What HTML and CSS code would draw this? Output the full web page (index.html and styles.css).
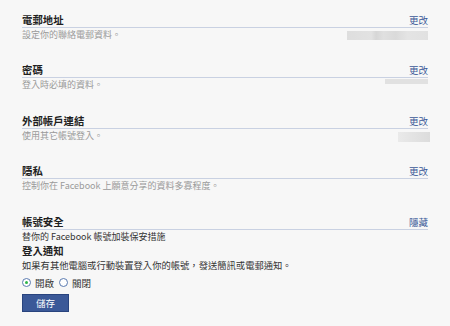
FILE: index.html
```html
<!DOCTYPE html>
<html lang="zh-Hant">
<head>
<meta charset="utf-8">
<link rel="stylesheet" href="styles.css">
</head>
<body>
<div class="page">
  <div class="section">
    <div class="head"><span class="title">電郵地址</span><a class="link">更改</a></div>
    <div class="desc"><span>設定你的聯絡電郵資料。</span><span class="blur blur-email"></span></div>
  </div>
  <div class="section">
    <div class="head"><span class="title">密碼</span><a class="link">更改</a></div>
    <div class="desc"><span>登入時必填的資料。</span><span class="blur blur-pass"></span></div>
  </div>
  <div class="section">
    <div class="head"><span class="title">外部帳戶連結</span><a class="link">更改</a></div>
    <div class="desc"><span>使用其它帳號登入。</span><span class="blur blur-ext"></span></div>
  </div>
  <div class="section">
    <div class="head"><span class="title">隱私</span><a class="link">更改</a></div>
    <div class="desc"><span>控制你在 Facebook 上願意分享的資料多寡程度。</span></div>
  </div>
  <div class="section last">
    <div class="head"><span class="title">帳號安全</span><a class="link">隱藏</a></div>
    <div class="sec-desc">替你的 Facebook 帳號加裝保安措施</div>
    <div class="sub-title">登入通知</div>
    <div class="sub-text">如果有其他電腦或行動裝置登入你的帳號，發送簡訊或電郵通知。</div>
    <div class="radios">
      <span class="radio on"></span><span class="rlabel">開啟</span>
      <span class="radio"></span><span class="rlabel">關閉</span>
    </div>
    <button class="save">儲存</button>
  </div>
</div>
</body>
</html>
```

FILE: styles.css
```css
html, body {
  margin: 0;
  padding: 0;
  background: #f7f7f7;
}
body {
  font-family: "Noto Sans CJK TC", "Liberation Sans", sans-serif;
  color: #333;
}
.page {
  width: 406px;
  padding: 12px 0 0 22px;
}
.section {
  margin-bottom: 20.25px;
}
.head {
  display: flex;
  justify-content: space-between;
  align-items: center;
  height: 14px;
  padding-top: 1px;
  border-bottom: 1px solid #c9d1e2;
}
.section.last .head {
  padding-top: 2px;
}
.title {
  font-size: 10.4px;
  font-weight: bold;
  color: #1f1f1f;
  line-height: 14px;
}
.link {
  font-size: 9.5px;
  color: #3b5998;
  line-height: 14px;
  cursor: pointer;
}
.desc {
  display: flex;
  justify-content: space-between;
  align-items: flex-start;
  height: 14px;
  font-size: 9px;
  line-height: 14px;
  color: #9a9a9a;
}
.blur {
  display: block;
}
.blur-email {
  width: 81px;
  height: 9px;
  margin-top: 3px;
  background: linear-gradient(90deg, #dedede 0%, #e2e2e2 30%, #d6d6d6 36%, #e0e0e0 45%, #dadada 60%, #e4e4e4 75%, #e1e1e1 100%);
}
.blur-pass {
  width: 43px;
  height: 5px;
  margin-top: 1px;
  background: #e1e1e1;
}
.blur-ext {
  width: 32px;
  height: 10px;
  margin-top: 3px;
  margin-right: -2px;
  background: linear-gradient(90deg, #eaeaea 0%, #e4e4e4 40%, #dcdcdc 100%);
}
.sec-desc {
  font-size: 9px;
  line-height: 14px;
  color: #333;
}
.sub-title {
  font-size: 10.4px;
  font-weight: bold;
  color: #1f1f1f;
  line-height: 14px;
}
.sub-text {
  font-size: 9.3px;
  line-height: 14.5px;
  color: #333;
}
.radios {
  display: flex;
  align-items: center;
  height: 14px;
  margin-top: 3px;
}
.radio {
  box-sizing: border-box;
  width: 9px;
  height: 9px;
  border: 1px solid #5a7ab0;
  border-radius: 50%;
  background: #fff;
  position: relative;
}
.radio.on::after {
  content: "";
  position: absolute;
  left: 2px;
  top: 2px;
  width: 3px;
  height: 3px;
  border-radius: 50%;
  background: #2fb54a;
}
.rlabel {
  font-size: 9.5px;
  color: #333;
  margin-left: 4px;
  margin-right: 5px;
}
.save {
  display: block;
  box-sizing: border-box;
  width: 47px;
  height: 18px;
  margin-top: 4px;
  padding: 0;
  background: #3b5998;
  border: 1px solid #29447e;
  color: #fff;
  font-family: "Noto Sans CJK TC", "Liberation Sans", sans-serif;
  font-size: 9.5px;
  line-height: 16px;
}
```
